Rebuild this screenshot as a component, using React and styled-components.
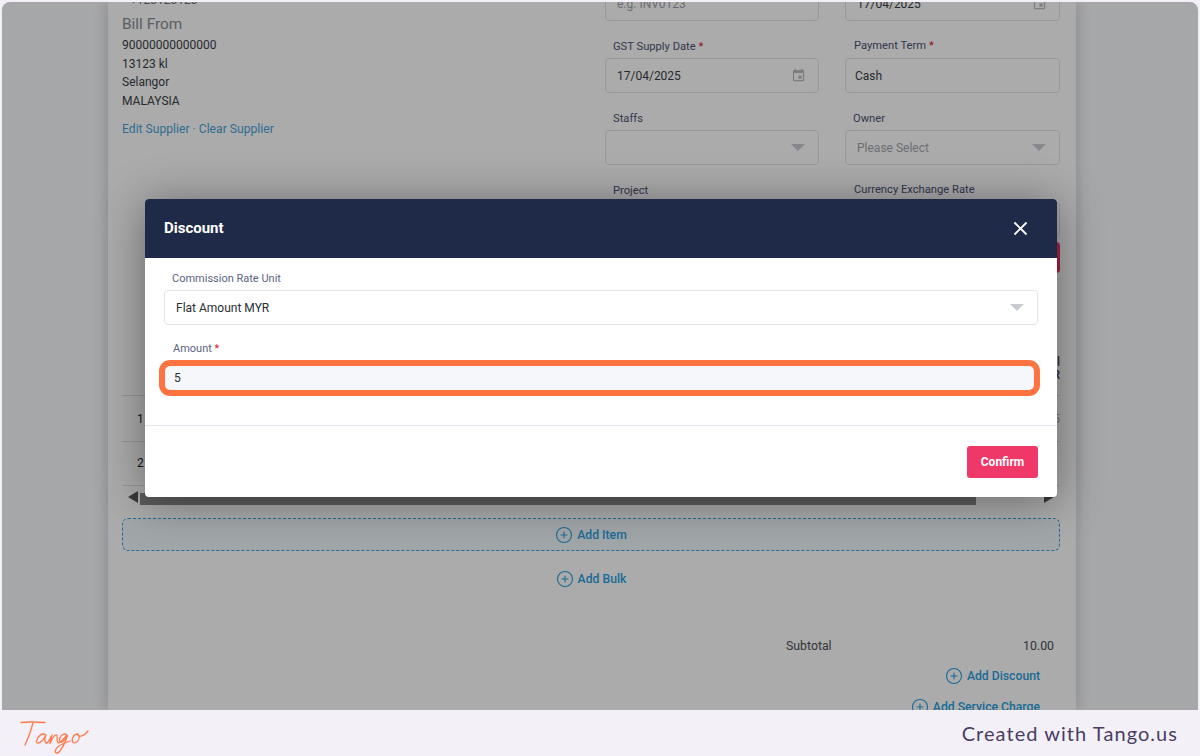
import React from "react";
import styled, { createGlobalStyle } from "styled-components";
import { CirclePlus } from "lucide-react";
import { MdClose, MdEvent } from "react-icons/md";

const GlobalStyle = createGlobalStyle`
  html, body {
    margin: 0;
    padding: 0;
    background: #f3f1f7;
  }
  * {
    box-sizing: border-box;
  }
`;

const Field = ({ label, required, right, children }) => (
  <FieldWrap>
    <FieldLabel $right={right}>
      {label}
      {required && <Star> *</Star>}
    </FieldLabel>
    {children}
  </FieldWrap>
);

const AddLink = ({ children }) => (
  <AddLinkWrap>
    <CirclePlus size={18} strokeWidth={1.5} />
    {children}
  </AddLinkWrap>
);

const TangoLogo = () => (
  <svg width="90" height="46" viewBox="0 0 90 46" fill="none" stroke="#ff7a4d" strokeWidth="1.3" strokeLinecap="round" strokeLinejoin="round">
    <path d="M11 12.5C19 11.5 27 12 35 12.5" />
    <path d="M23 13C21 21 18 29 15 35" />
    <path d="M36 25C32 22 27 27 26.5 31C26 35 32 33 35.5 26C34.5 29 34.5 33 36.5 33C38.5 33 40 28 42 25C41.5 28 40 31 40 33.5C42 29 44.5 24.5 46.5 25C48.5 26 45.5 32 48.5 33C50.5 33 53 29 57 25C53 22 49 27 49.5 31C50 34 54 32 57.5 25.5C56 31 53 37 50 41C47 44.5 44 43 46 39C48 35.5 54 33 60 31" />
    <path d="M68 24C63 24 61 30 63 32.5C66 34 70 30 69 26.5C68.5 25 68 24 67 24C69 28 74 26 78 21" />
  </svg>
);

export default function App() {
  return (
    <>
      <GlobalStyle />
      <Frame>
        <Screen>
          <Card>
            <Scrolled>
              <TopSection>
                <Supplier>
                  <Phone>+123123123</Phone>
                  <BillTitle>Bill From</BillTitle>
                  <Address>90000000000000</Address>
                  <Address>13123 kl</Address>
                  <Address>Selangor</Address>
                  <Address>MALAYSIA</Address>
                  <SupplierLinks>Edit Supplier · Clear Supplier</SupplierLinks>
                </Supplier>
                <FormGrid>
                  <Field label="Reference No">
                    <Control $placeholder>e.g. INV0123</Control>
                  </Field>
                  <Field label="Date" required>
                    <Control>
                      17/04/2025
                      <CalendarIcon />
                    </Control>
                  </Field>
                  <Field label="GST Supply Date" required>
                    <Control>
                      17/04/2025
                      <CalendarIcon />
                    </Control>
                  </Field>
                  <Field label="Payment Term" required right>
                    <Control $right>Cash</Control>
                  </Field>
                  <Field label="Staffs">
                    <Control>
                      <span />
                      <Caret />
                    </Control>
                  </Field>
                  <Field label="Owner">
                    <Control $placeholder>
                      Please Select
                      <Caret />
                    </Control>
                  </Field>
                  <Field label="Project">
                    <Control />
                  </Field>
                  <Field label="Currency Exchange Rate" right>
                    <Control />
                  </Field>
                </FormGrid>
              </TopSection>
              <ActionRow>
                <RedButton>Add</RedButton>
              </ActionRow>
              <TableHead>
                <span>Total</span>
                <span>MYR</span>
              </TableHead>
              <TableRow $height={46}>
                <span>1</span>
                <RowValue>5</RowValue>
              </TableRow>
              <TableRow $height={44}>
                <RowIndex>2</RowIndex>
              </TableRow>
              <ScrollBar>
                <ArrowLeft />
                <ScrollThumb />
                <ArrowRight />
              </ScrollBar>
              <AddItemBox>
                <AddLink>Add Item</AddLink>
              </AddItemBox>
              <AddBulkRow>
                <AddLink>Add Bulk</AddLink>
              </AddBulkRow>
              <SummaryRow>
                <span>Subtotal</span>
                <span>10.00</span>
              </SummaryRow>
              <SummaryLink>
                <AddLink>Add Discount</AddLink>
              </SummaryLink>
              <SummaryLink>
                <AddLink>Add Service Charge</AddLink>
              </SummaryLink>
            </Scrolled>
          </Card>
          <Overlay />
          <Modal>
            <ModalHeader>
              <ModalTitle>Discount</ModalTitle>
              <MdClose size={23} color="#fff" />
            </ModalHeader>
            <ModalBody>
              <ModalLabel>Commission Rate Unit</ModalLabel>
              <ModalSelect>
                Flat Amount MYR
                <Caret />
              </ModalSelect>
              <AmountLabel>
                Amount<Star> *</Star>
              </AmountLabel>
              <AmountInput>5</AmountInput>
            </ModalBody>
            <ModalFooter>
              <ConfirmButton>Confirm</ConfirmButton>
            </ModalFooter>
          </Modal>
        </Screen>
        <Footer>
          <TangoLogo />
          <FooterText>Created with Tango.us</FooterText>
        </Footer>
      </Frame>
    </>
  );
}

const Frame = styled.div`
  width: 1200px;
  height: 756px;
  padding: 2px 2px 0;
  display: flex;
  flex-direction: column;
  background: #f3f1f7;
  font-family: Roboto, "Liberation Sans", sans-serif;
  font-size: 12px;
  color: #212529;
  overflow: hidden;
`;

const Screen = styled.div`
  position: relative;
  height: 708px;
  background: #f8f9fb;
  border-radius: 8px 8px 0 0;
  overflow: hidden;
`;

const Card = styled.div`
  display: flow-root;
  width: 968px;
  height: 100%;
  margin-left: 106px;
  background: #fff;
  box-shadow: 0 0 14px rgba(0, 0, 0, 0.2);
`;

const Scrolled = styled.div`
  margin-top: -20px;
  padding: 0 16px 0 14px;
`;

const TopSection = styled.div`
  display: grid;
  grid-template-columns: 483px 1fr;
  height: 260px;
`;

const Supplier = styled.div`
  display: flex;
  flex-direction: column;
`;

const Phone = styled.div`
  height: 20px;
  padding: 11px 0 0 8px;
  line-height: 14px;
  color: #6c757d;
`;

const BillTitle = styled.div`
  margin-top: 12px;
  margin-bottom: 2px;
  height: 20px;
  font-size: 15.4px;
  line-height: 20px;
  color: #868e96;
`;

const Address = styled.div`
  height: 18.6px;
  line-height: 18.6px;
  color: #3a3f47;
`;

const SupplierLinks = styled.div`
  margin-top: 10px;
  font-size: 12.15px;
  line-height: 18px;
  color: #4aa3d8;
`;

const FormGrid = styled.div`
  margin-top: -19px;
  display: grid;
  grid-template-columns: 214px 215px;
  column-gap: 26px;
  row-gap: 14px;
  align-content: start;
`;

const FieldWrap = styled.div`
  display: flex;
  flex-direction: column;
`;

const FieldLabel = styled.div`
  height: 23px;
  padding: ${(props) => (props.$right ? "3px 0 0 9px" : "4px 0 0 8px")};
  font-size: 11.2px;
  line-height: 16px;
  color: #4b5474;
`;

const Star = styled.span`
  color: #e0152e;
`;

const Control = styled.div`
  height: 35px;
  padding: 0 12px 0 ${(props) => (props.$right ? "9px" : "11px")};
  display: flex;
  align-items: center;
  justify-content: space-between;
  background: #fff;
  border: 1px solid #dfe1e8;
  border-radius: 4px;
  color: ${(props) => (props.$placeholder ? "#a1a5ad" : "#3a3f47")};
`;

const CalendarIcon = styled(MdEvent)`
  width: 15px;
  height: 15px;
  color: #b9bdc4;
`;

const Caret = styled.span`
  width: 0;
  height: 0;
  margin-right: 1px;
  border-left: 7.5px solid transparent;
  border-right: 7.5px solid transparent;
  border-top: 7px solid #c8cbd2;
`;

const ActionRow = styled.div`
  display: flex;
  justify-content: flex-end;
  height: 31px;
`;

const RedButton = styled.div`
  width: 90px;
  height: 31px;
  display: flex;
  align-items: center;
  justify-content: center;
  background: #ef3768;
  color: #fff;
  border-radius: 4px;
`;

const TableHead = styled.div`
  height: 123px;
  padding-bottom: 13px;
  display: flex;
  flex-direction: column;
  justify-content: flex-end;
  align-items: flex-end;
  border-bottom: 1px solid #dfe1e8;
  line-height: 13px;
  color: #3f4a6b;
  font-weight: 500;
`;

const TableRow = styled.div`
  height: ${(props) => props.$height}px;
  padding: 0 0 0 15px;
  display: flex;
  align-items: center;
  justify-content: space-between;
  border-bottom: 1px solid #dfe1e8;
`;

const RowIndex = styled.span`
  margin-top: -2px;
`;

const RowValue = styled.span`
  color: #a8acb3;
`;

const ScrollBar = styled.div`
  height: 21px;
  padding: 0 6px;
  display: flex;
  align-items: center;
`;

const ArrowLeft = styled.span`
  border-top: 6px solid transparent;
  border-bottom: 6px solid transparent;
  border-right: 10px solid #555;
`;

const ArrowRight = styled.span`
  margin-left: auto;
  border-top: 6px solid transparent;
  border-bottom: 6px solid transparent;
  border-left: 10px solid #555;
`;

const ScrollThumb = styled.div`
  width: 836px;
  height: 12px;
  margin-left: 2px;
  margin-top: 4px;
  background: #8c8c8c;
`;

const AddItemBox = styled.div`
  height: 33px;
  margin-top: 11px;
  display: flex;
  align-items: center;
  justify-content: center;
  background: #f1f8fd;
  border: 1px dashed #3aa0dc;
  border-radius: 6px;
`;

const AddBulkRow = styled.div`
  height: 22px;
  margin-top: 17px;
  display: flex;
  justify-content: center;
`;

const AddLinkWrap = styled.div`
  height: 22px;
  display: flex;
  align-items: center;
  gap: 4px;
  font-size: 12.2px;
  font-weight: 500;
  color: #2aa0e0;
`;

const SummaryRow = styled.div`
  height: 20px;
  margin-top: 46px;
  padding: 0 6px 0 664px;
  display: flex;
  align-items: center;
  justify-content: space-between;
  font-size: 12.3px;
  color: #4a4f57;
`;

const SummaryLink = styled.div`
  height: 22px;
  margin-top: 9px;
  padding-right: 20px;
  display: flex;
  justify-content: flex-end;
`;

const Overlay = styled.div`
  position: absolute;
  inset: 0;
  background: rgba(0, 0, 0, 0.33);
`;

const Modal = styled.div`
  position: absolute;
  left: 143px;
  top: 197px;
  width: 912px;
  height: 298px;
  display: flex;
  flex-direction: column;
  background: #fff;
  border-radius: 4px;
  overflow: hidden;
  box-shadow: 0 4px 45px rgba(0, 0, 0, 0.4);
`;

const ModalHeader = styled.div`
  height: 59px;
  padding: 0 25px 0 19px;
  display: flex;
  align-items: center;
  justify-content: space-between;
  background: #1f2a48;
  flex-shrink: 0;
`;

const ModalTitle = styled.div`
  margin-top: -2px;
  font-size: 15px;
  font-weight: 700;
  color: #fff;
`;

const ModalBody = styled.div`
  height: 168px;
  padding: 14px 19px 0;
  border-bottom: 1px solid #e3e5ec;
  flex-shrink: 0;
`;

const ModalLabel = styled.div`
  height: 18px;
  padding-left: 8px;
  font-size: 11px;
  line-height: 14px;
  color: #5a6484;
`;

const ModalSelect = styled.div`
  height: 35px;
  padding: 0 12px 0 11px;
  display: flex;
  align-items: center;
  justify-content: space-between;
  border: 1px solid #e1e3e9;
  border-radius: 4px;
  color: #2a2e35;
`;

const AmountLabel = styled.div`
  height: 35px;
  padding: 17px 0 0 9px;
  font-size: 11px;
  line-height: 14px;
  color: #5a6484;
`;

const AmountInput = styled.div`
  height: 36px;
  margin: 0 -2px 0 -5px;
  padding-left: 9px;
  display: flex;
  align-items: center;
  background: #f6f7fb;
  border: 6px solid #ff7340;
  border-radius: 11px;
  color: #2a2e35;
`;

const ModalFooter = styled.div`
  flex: 1;
  padding: 20px 19px 0 0;
  display: flex;
  justify-content: flex-end;
  align-items: flex-start;
`;

const ConfirmButton = styled.div`
  width: 71px;
  height: 32px;
  display: flex;
  align-items: center;
  justify-content: center;
  background: #ef3768;
  border-radius: 3px;
  font-weight: 700;
  color: #fff;
`;

const Footer = styled.div`
  height: 46px;
  display: flex;
  align-items: center;
  justify-content: space-between;
  padding: 0 20px 0 8px;
`;

const FooterText = styled.div`
  font-family: Lato, "Noto Sans", sans-serif;
  font-size: 20px;
  letter-spacing: 1.05px;
  color: #4a3d61;
`;
